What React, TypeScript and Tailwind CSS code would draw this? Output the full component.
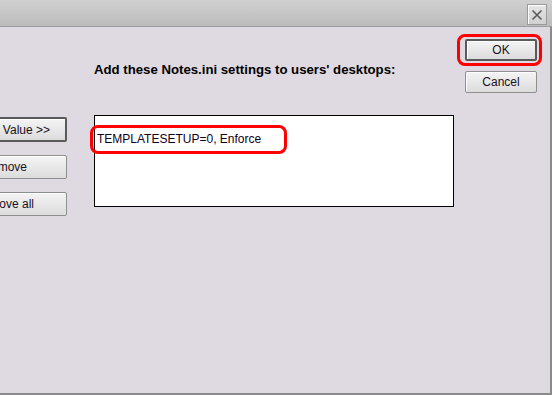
import React from 'react';

const font = { fontFamily: '"Liberation Sans", Arial, sans-serif' };

function WinButton({
  label,
  className = '',
  strong = false,
}: {
  label: string;
  className?: string;
  strong?: boolean;
}) {
  return (
    <button
      className={`shrink-0 flex items-center text-[12px] text-[#1a1020] rounded-[2px] bg-gradient-to-b from-[#f4f4f4] to-[#dcdcdc] shadow-[inset_1px_1px_0_#ffffff] ${
        strong ? 'border-2 border-[#5a5a5a]' : 'border border-[#8f8f8f]'
      } ${className}`}
    >
      {label}
    </button>
  );
}

export default function App() {
  return (
    <div
      className="w-[552px] h-[395px] overflow-hidden flex flex-col bg-[#dfd9e1]"
      style={font}
    >
      {/* Title bar */}
      <div className="h-[27px] shrink-0 flex justify-end items-start pt-[4px] pr-[5px] bg-gradient-to-b from-[#d0d0d0] to-[#bcbcbc] border-b border-[#9c9c9c]">
        <button className="w-[20px] h-[21px] flex items-center justify-center border border-[#9a9a9a] bg-gradient-to-b from-[#e6e6e6] to-[#d0d0d0] shadow-[inset_1px_1px_0_#ffffff]">
          <svg width="12" height="12" viewBox="0 0 12 12">
            <path d="M1.5 1.5L10.5 10.5M10.5 1.5L1.5 10.5" stroke="#5a5a5a" strokeWidth="1.6" />
          </svg>
        </button>
      </div>

      {/* Body */}
      <div className="flex-1 flex items-start border-r-2 border-b-2 border-[#8a8a8a]">
        {/* Left buttons, partly outside the window edge */}
        <div className="w-[67px] shrink-0 flex flex-col items-end gap-[13px] pt-[90px]">
          <WinButton label="Add Value >>" strong className="w-[100px] h-[25px] justify-end pr-[15px]" />
          <WinButton label="Remove" className="w-[100px] h-[24px] justify-end pr-[39px]" />
          <WinButton label="Remove all" className="w-[100px] h-[24px] justify-end pr-[32px]" />
        </div>

        {/* Middle */}
        <div className="ml-[27px] pt-[35px] flex flex-col">
          <div className="h-[15px] leading-[15px] text-[13.2px] font-bold text-black whitespace-nowrap">
            Add these Notes.ini settings to users' desktops:
          </div>
          <div className="relative mt-[38px] w-[360px] h-[92px] bg-white border border-black">
            <div className="pl-[2px] pt-[16px] text-[12px] leading-[14px] text-[#10001a] whitespace-nowrap">
              TEMPLATESETUP=0, Enforce
            </div>
            <div className="absolute left-[-5px] top-[9px] w-[197px] h-[29px] border-[3px] border-[#ff0000] rounded-[8px]" />
          </div>
        </div>

        {/* Right buttons */}
        <div className="ml-[11px] pt-[12px] flex flex-col gap-[10px]">
          <div className="relative">
            <WinButton label="OK" strong className="w-[72px] h-[22px] justify-center" />
            <div className="absolute left-[-8px] top-[-5px] right-[-5px] bottom-[-5px] border-[3px] border-[#ff0000] rounded-[8px]" />
          </div>
          <WinButton label="Cancel" className="w-[72px] h-[22px] justify-center" />
        </div>
      </div>
    </div>
  );
}
